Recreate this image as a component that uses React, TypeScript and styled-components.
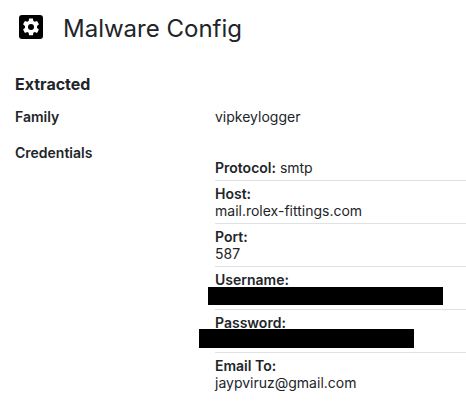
import { FC } from "react";
import styled, { createGlobalStyle } from "styled-components";

const GlobalStyle = createGlobalStyle`
  body {
    margin: 0;
    background: #ffffff;
    color: #212529;
    font-family: Inter, "Liberation Sans", sans-serif;
    font-size: 14px;
    line-height: 17px;
  }
`;

const Page = styled.div`
  width: 466px;
  height: 416px;
  overflow: hidden;
  padding: 0 0 0 15px;
  box-sizing: border-box;
`;

const Header = styled.header`
  display: flex;
  align-items: center;
  gap: 20px;
  padding-left: 4px;
  height: 56px;
`;

const IconSlot = styled.span`
  display: flex;
  margin-top: -2px;
`;

const Title = styled.h1`
  margin: 0;
  font-size: 24px;
  font-weight: 400;
  line-height: 29px;
`;

const SectionTitle = styled.h2`
  margin: 18px 0 0;
  font-size: 16px;
  font-weight: 700;
  line-height: 20px;
`;

const FieldRow = styled.div`
  display: grid;
  grid-template-columns: 200px 1fr;
  margin-top: 14px;

  & + & {
    margin-top: 19px;
  }
`;

const FieldLabel = styled.div`
  font-weight: 600;
`;

const CredentialList = styled.div`
  display: flex;
  flex-direction: column;
  margin-top: 11px;
`;

const Credential = styled.div`
  position: relative;
  padding: 4px 0;
  border-bottom: 1px solid #dee2e6;

  &:last-child {
    border-bottom: none;
  }
`;

const Key = styled.strong`
  font-weight: 600;
`;

const Redaction = styled.div<{ $left: number; $width: number; $top: number; $height: number }>`
  position: absolute;
  left: ${(p) => p.$left}px;
  top: ${(p) => p.$top}px;
  width: ${(p) => p.$width}px;
  height: ${(p) => p.$height}px;
  background: #000000;
`;

const GearIcon: FC = () => (
  <svg width="24" height="24" viewBox="0 0 24 24">
    <rect width="24" height="24" rx="3" fill="#000" />
    <path
      fill="#fff"
      transform="translate(12 12) scale(1.12) translate(-12 -12)"
      d="M10.3 4.5h3.4l.4 2.2 1.2.7 2.1-.8 1.7 3-1.7 1.4v1.9l1.7 1.4-1.7 3-2.1-.8-1.2.7-.4 2.2h-3.4l-.4-2.2-1.2-.7-2.1.8-1.7-3 1.7-1.4v-1.9L4.9 9.6l1.7-3 2.1.8 1.2-.7z"
    />
    <circle cx="12" cy="12" r="3" fill="#000" />
  </svg>
);

export default function App() {
  return (
    <Page>
      <GlobalStyle />
      <Header>
        <IconSlot>
          <GearIcon />
        </IconSlot>
        <Title>Malware Config</Title>
      </Header>
      <SectionTitle>Extracted</SectionTitle>
      <FieldRow>
        <FieldLabel>Family</FieldLabel>
        <div>vipkeylogger</div>
      </FieldRow>
      <FieldRow>
        <FieldLabel>Credentials</FieldLabel>
        <CredentialList>
          <Credential>
            <Key>Protocol:</Key> smtp
          </Credential>
          <Credential>
            <Key>Host:</Key>
            <div>mail.rolex-fittings.com</div>
          </Credential>
          <Credential>
            <Key>Port:</Key>
            <div>587</div>
          </Credential>
          <Credential>
            <Key>Username:</Key>
            <div>&nbsp;</div>
            <Redaction $left={-7} $top={20} $width={235} $height={18} />
          </Credential>
          <Credential>
            <Key>Password:</Key>
            <div>&nbsp;</div>
            <Redaction $left={-16} $top={19} $width={215} $height={19} />
          </Credential>
          <Credential>
            <Key>Email To:</Key>
            <div>jaypviruz@gmail.com</div>
          </Credential>
        </CredentialList>
      </FieldRow>
    </Page>
  );
}
